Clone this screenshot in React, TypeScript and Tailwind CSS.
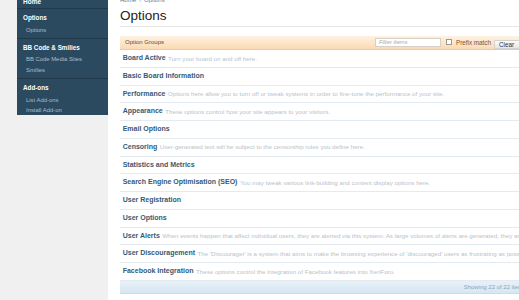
import React from "react";

const rows: [string, string][] = [
  ["Board Active", "Turn your board on and off here."],
  ["Basic Board Information", ""],
  ["Performance", "Options here allow you to turn off or tweak systems in order to fine-tune the performance of your site."],
  ["Appearance", "These options control how your site appears to your visitors."],
  ["Email Options", ""],
  ["Censoring", "User-generated text will be subject to the censorship rules you define here."],
  ["Statistics and Metrics", ""],
  ["Search Engine Optimisation (SEO)", "You may tweak various link-building and content display options here."],
  ["User Registration", ""],
  ["User Options", ""],
  ["User Alerts", "When events happen that affect individual users, they are alerted via this system. As large volumes of alerts are generated, they are pruned periodically."],
  ["User Discouragement", "The 'Discourager' is a system that aims to make the browsing experience of 'discouraged' users as frustrating as possible."],
  ["Facebook Integration", "These options control the integration of Facebook features into XenForo."],
];

const sections: { title: string; links: string[] }[] = [
  { title: "Options", links: ["Options"] },
  { title: "BB Code & Smilies", links: ["BB Code Media Sites", "Smilies"] },
  { title: "Add-ons", links: ["List Add-ons", "Install Add-on"] },
];

export default function App() {
  return (
    <div
      className="flex w-[519px] h-[300px] overflow-hidden bg-white"
      style={{ fontFamily: '"Liberation Sans", Arial, sans-serif' }}
    >
      <div className="w-[108px] shrink-0 bg-[#f0f0f0] pl-[17px]">
        <div className="w-[91px] h-[115px] overflow-hidden bg-[#2b4a5f]">
          <div className="-mt-[5px] h-[14.2px] flex items-center pl-[6px] border-b border-[#1f394b] text-[6.5px] font-bold text-white">
            Home
          </div>
          {sections.map((s, i) => (
            <div
              key={s.title}
              className={`pt-[4px] pb-[3px] ${i < 2 ? "border-b border-[#1f394b]" : ""}`}
            >
              <div className="h-[10px] leading-[10px] pl-[6px] text-[6.3px] font-bold text-white">
                {s.title}
              </div>
              <div className="mt-[1.5px]">
                {s.links.map((l) => (
                  <div
                    key={l}
                    className="h-[10.3px] leading-[10.3px] pl-[9px] text-[5.9px] text-[#a9bdcc]"
                  >
                    {l}
                  </div>
                ))}
              </div>
            </div>
          ))}
        </div>
      </div>
      <div className="flex-1 pl-[12px]">
        <div className="w-[410px]">
          <div className="-mt-[3px] h-[7px] leading-[7px] text-[6px] text-[#5d7f97] flex gap-[3px]">
            <span>Home</span>
            <span className="text-[#9fb3c2]">›</span>
            <span>Options</span>
          </div>
          <div className="mt-[4px] h-[19px] leading-[16px] text-[13.5px] text-[#222] border-b border-[#e6e6e6]">
            Options
          </div>
          <div className="mt-[8.5px] h-[14.5px] flex items-center pl-[5px] pr-[8px] bg-gradient-to-b from-[#fef2e3] to-[#fcdab2] border-b border-[#f5c690]">
            <span className="text-[6px] text-[#6b4a2c]">Option Groups</span>
            <div className="ml-auto flex items-center h-full">
              <div className="w-[66px] h-[9px] bg-white border border-[#d8d0c4] flex items-center pl-[3px] text-[5.8px] italic text-[#a9a9a9]">
                Filter items
              </div>
              <div className="ml-[5px] w-[6px] h-[6px] bg-white border border-[#9a9a9a]" />
              <span className="ml-[4px] text-[6.3px] text-[#7a5230]">Prefix match</span>
              <div className="ml-[3px] self-end w-[28px] h-[9.5px] flex items-center pl-[4px] text-[6.3px] text-[#333] bg-gradient-to-b from-[#fbfbfb] to-[#e6e6e6] border border-[#d2d2d2] rounded-[1px]">
                Clear
              </div>
            </div>
          </div>
          {rows.map(([h, d]) => (
            <div
              key={h}
              className="h-[17.75px] flex items-center pl-[2.7px] border-b border-[#e3ebf1] whitespace-nowrap overflow-hidden"
            >
              <span className="text-[7px] font-bold text-[#365a75]">{h}</span>
              {d && (
                <span className="ml-[2.5px] text-[6.2px] text-[#b9c2c9]">{d}</span>
              )}
            </div>
          ))}
          <div className="h-[13.5px] flex items-center justify-end pr-[4px] bg-gradient-to-b from-[#e8f1f8] to-[#d6e6f2] border-b border-[#c9dcea] text-[6px] text-[#8aa6bb] whitespace-nowrap">
            Showing 22 of 22 items
          </div>
        </div>
      </div>
    </div>
  );
}
